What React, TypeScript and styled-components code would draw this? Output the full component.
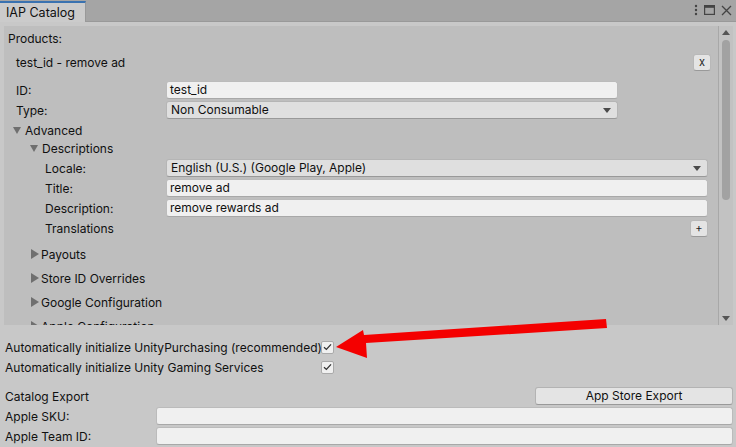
import React from "react";
import styled, { createGlobalStyle } from "styled-components";

const Global = createGlobalStyle`
  html, body { margin: 0; padding: 0; background: #c8c8c8; }
  * { box-sizing: border-box; }
`;

const Window = styled.div`
  position: relative;
  width: 736px;
  height: 447px;
  overflow: hidden;
  background: #c8c8c8;
  font-family: Inter, "Noto Sans", sans-serif;
  font-size: 12px;
  color: #101010;
  display: flex;
  flex-direction: column;
`;

const TabBar = styled.div`
  height: 22px;
  flex: none;
  background: #a5a5a5;
  display: flex;
  align-items: flex-end;
  justify-content: space-between;
  border-bottom: 1px solid #999;
`;

const Tab = styled.div`
  width: 86px;
  height: 21px;
  background: #cbcbcb;
  border-top: 2px solid #3a72b0;
  border-right: 1px solid #999;
  padding: 2px 0 0 6px;
  line-height: 15px;
  font-size: 12.5px;
  margin-bottom: -1px;
`;

const TabIcons = styled.div`
  display: flex;
  align-items: center;
  gap: 6px;
  height: 22px;
  padding-right: 4px;
  color: #444;
`;

const Body = styled.div`
  flex: 1;
  display: flex;
  flex-direction: column;
  padding: 4px 3px 0 4px;
`;

const Panel = styled.div`
  height: 299px;
  flex: none;
  background: #bebebe;
  display: flex;
  overflow: hidden;
`;

const PanelContent = styled.div`
  flex: 1;
  padding-top: 3px;
  display: flex;
  flex-direction: column;
`;

const Scrollbar = styled.div`
  width: 15px;
  flex: none;
  background: #c2c2c2;
  border-left: 1px solid #a8a8a8;
  display: flex;
  flex-direction: column;
  align-items: center;
  padding-top: 4px;
  position: relative;
`;

const Thumb = styled.div`
  width: 8px;
  height: 160px;
  margin-top: 5px;
  border-radius: 4px;
  background: #a2a2a2;
`;

const ScrollArrow = styled.div<{ $down?: boolean }>`
  width: 0;
  height: 0;
  border-left: 4px solid transparent;
  border-right: 4px solid transparent;
  ${(p) =>
    p.$down
      ? "border-top: 5px solid #555; position: absolute; bottom: 4px;"
      : "border-bottom: 5px solid #555;"}
`;

const Row = styled.div<{ $indent?: number; $mt?: number; $right?: number }>`
  flex: none;
  height: 18px;
  margin-top: ${(p) => p.$mt ?? 0}px;
  padding-left: ${(p) => p.$indent ?? 0}px;
  padding-right: ${(p) => p.$right ?? 0}px;
  display: flex;
  align-items: center;
  white-space: nowrap;
`;

const Label = styled.div<{ $w: number }>`
  width: ${(p) => p.$w}px;
  flex: none;
`;

const TextField = styled.div<{ $w?: number }>`
  ${(p) => (p.$w ? `width: ${p.$w}px;` : "flex: 1;")}
  height: 18px;
  background: #f0f0f0;
  border: 1px solid #bbb;
  border-bottom-color: #a8a8a8;
  border-radius: 3px;
  padding: 0 3px;
  line-height: 16px;
`;

const Dropdown = styled.div<{ $w?: number }>`
  ${(p) => (p.$w ? `width: ${p.$w}px;` : "flex: 1;")}
  height: 18px;
  background: #dfdfdf;
  border: 1px solid #b5b5b5;
  border-bottom-color: #999;
  border-radius: 3px;
  padding: 0 4px;
  line-height: 16px;
  display: flex;
  align-items: center;
  justify-content: space-between;
`;

const DropArrow = styled.span`
  width: 0;
  height: 0;
  border-left: 4px solid transparent;
  border-right: 4px solid transparent;
  border-top: 5px solid #4a4a4a;
  margin-right: 2px;
`;

const SmallButton = styled.div`
  width: 18px;
  height: 17px;
  background: #e4e4e4;
  border: 1px solid #b8b8b8;
  border-bottom-color: #999;
  border-radius: 3px;
  display: flex;
  align-items: center;
  justify-content: center;
  font-size: 11px;
  color: #222;
  margin-left: auto;
`;

const Button = styled.div<{ $w: number }>`
  width: ${(p) => p.$w}px;
  height: 18px;
  background: #e4e4e4;
  border: 1px solid #b3b3b3;
  border-bottom-color: #999;
  border-radius: 3px;
  text-align: center;
  line-height: 16px;
  margin-left: auto;
`;

const Fold = styled.span<{ $open?: boolean }>`
  width: 0;
  height: 0;
  margin-right: 4px;
  ${(p) =>
    p.$open
      ? "border-left: 4px solid transparent; border-right: 4px solid transparent; border-top: 7px solid #6f6f6f; margin-top: 1px;"
      : "border-top: 5px solid transparent; border-bottom: 5px solid transparent; border-left: 8px solid #6f6f6f; margin-left: 1px; margin-right: 2px;"}
`;

const Checkbox = styled.div`
  width: 13px;
  height: 13px;
  background: #f0f0f0;
  border: 1px solid #aaa;
  border-radius: 2px;
  display: flex;
  align-items: center;
  justify-content: center;
`;

const Lower = styled.div`
  display: flex;
  flex-direction: column;
  padding-left: 1px;
`;

const ArrowOverlay = styled.svg`
  position: absolute;
  left: 0;
  top: 0;
  pointer-events: none;
`;

const Check = () => (
  <svg width="9" height="8" viewBox="0 0 9 8">
    <path d="M1 4.2 L3.4 6.4 L8 1.4" stroke="#333" strokeWidth="1.3" fill="none" />
  </svg>
);

export default function App() {
  return (
    <Window>
      <Global />
      <TabBar>
        <Tab>IAP Catalog</Tab>
        <TabIcons>
          <svg width="4" height="12" viewBox="0 0 4 12">
            <circle cx="2" cy="2" r="1.2" fill="#444" />
            <circle cx="2" cy="6" r="1.2" fill="#444" />
            <circle cx="2" cy="10" r="1.2" fill="#444" />
          </svg>
          <svg width="11" height="10" viewBox="0 0 11 10">
            <rect x="0.6" y="0.6" width="9.8" height="8.8" fill="none" stroke="#444" strokeWidth="1.2" />
            <rect x="0.6" y="0.6" width="9.8" height="2.2" fill="#444" />
          </svg>
          <svg width="11" height="11" viewBox="0 0 11 11">
            <path d="M1 1 L10 10 M10 1 L1 10" stroke="#444" strokeWidth="1.3" />
          </svg>
        </TabIcons>
      </TabBar>
      <Body>
        <Panel>
          <PanelContent>
            <Row $indent={4}>Products:</Row>
            <Row $indent={12} $mt={6} $right={7}>
              test_id - remove ad
              <SmallButton>x</SmallButton>
            </Row>
            <Row $indent={12} $mt={10}>
              <Label $w={150}>ID:</Label>
              <TextField $w={452}>test_id</TextField>
            </Row>
            <Row $indent={12} $mt={2}>
              <Label $w={150}>Type:</Label>
              <Dropdown $w={452}>
                Non Consumable
                <DropArrow />
              </Dropdown>
            </Row>
            <Row $indent={9} $mt={2}>
              <Fold $open />
              Advanced
            </Row>
            <Row $indent={26}>
              <Fold $open />
              Descriptions
            </Row>
            <Row $indent={41} $mt={2} $right={10}>
              <Label $w={121}>Locale:</Label>
              <Dropdown>
                English (U.S.) (Google Play, Apple)
                <DropArrow />
              </Dropdown>
            </Row>
            <Row $indent={41} $mt={2} $right={10}>
              <Label $w={121}>Title:</Label>
              <TextField>remove ad</TextField>
            </Row>
            <Row $indent={41} $mt={2} $right={10}>
              <Label $w={121}>Description:</Label>
              <TextField>remove rewards ad</TextField>
            </Row>
            <Row $indent={41} $mt={2} $right={10}>
              Translations
              <SmallButton>+</SmallButton>
            </Row>
            <Row $indent={26} $mt={8}>
              <Fold />
              Payouts
            </Row>
            <Row $indent={26} $mt={6}>
              <Fold />
              Store ID Overrides
            </Row>
            <Row $indent={26} $mt={6}>
              <Fold />
              Google Configuration
            </Row>
            <Row $indent={26} $mt={6}>
              <Fold />
              Apple Configuration
            </Row>
          </PanelContent>
          <Scrollbar>
            <ScrollArrow />
            <Thumb />
            <ScrollArrow $down />
          </Scrollbar>
        </Panel>
        <Lower>
          <Row $mt={13}>
            <Label $w={316}>Automatically initialize UnityPurchasing (recommended)</Label>
            <Checkbox>
              <Check />
            </Checkbox>
          </Row>
          <Row $mt={2}>
            <Label $w={316}>Automatically initialize Unity Gaming Services</Label>
            <Checkbox>
              <Check />
            </Checkbox>
          </Row>
          <Row $mt={11}>
            Catalog Export
            <Button $w={198}>App Store Export</Button>
          </Row>
          <Row $mt={2}>
            <Label $w={151}>Apple SKU:</Label>
            <TextField />
          </Row>
          <Row $mt={2}>
            <Label $w={151}>Apple Team ID:</Label>
            <TextField />
          </Row>
        </Lower>
      </Body>
      <ArrowOverlay width="736" height="447" viewBox="0 0 736 447">
        <polygon
          points="606,319 607,328 366,343 367,358 336,347 363,330 364,335"
          fill="#f40000"
        />
      </ArrowOverlay>
    </Window>
  );
}
